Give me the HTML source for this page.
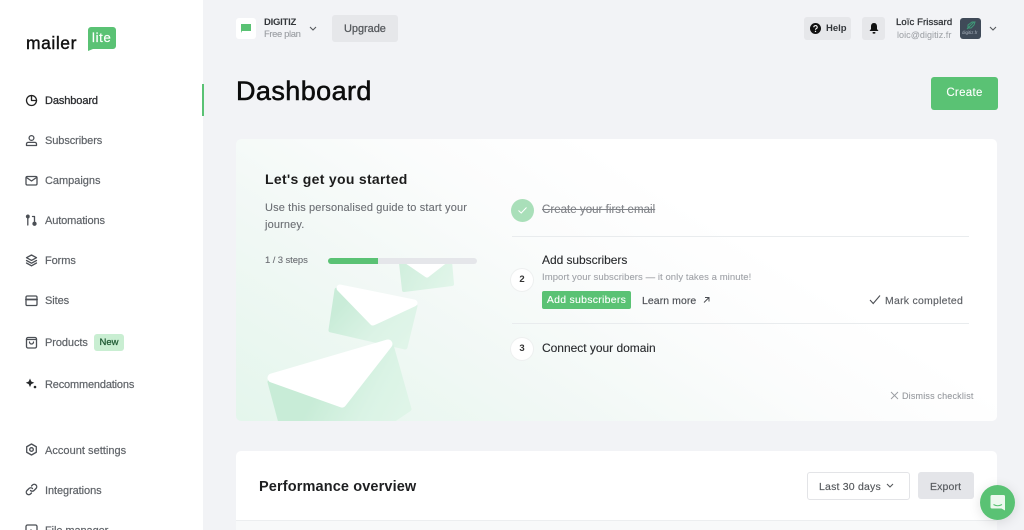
<!DOCTYPE html>
<html lang="en"><head><meta charset="utf-8"><title>Dashboard</title>
<style>
html,body{margin:0;padding:0;width:1024px;height:530px;overflow:hidden;background:#f2f3f6;font-family:"Liberation Sans",sans-serif;color:#1a1a1a}
#r{position:relative;width:1024px;height:530px;overflow:hidden;filter:blur(.3px)}
.a,.t{position:absolute}
.t{white-space:nowrap;line-height:14px}
.n{font-size:11px;color:#5f6368;left:45px;letter-spacing:-.08px;-webkit-text-stroke:.2px #5f6368}
svg{position:absolute;overflow:visible}
.ic{left:25px;width:13px;height:13px;fill:none;stroke:#4b4f55;stroke-width:1.3;stroke-linecap:round;stroke-linejoin:round}
.btn{position:absolute;border-radius:3px;background:#e6e7ea}
.num{position:absolute;width:22px;height:22px;border-radius:50%;background:#fff;box-shadow:0 0 0 1px #eef0f0;text-align:center;font-size:9.5px;font-weight:bold;line-height:22px;color:#333}
.hr{position:absolute;left:512px;width:457px;height:1px;background:#e9ecee}
</style></head><body><div id="r">

<div class="a" style="left:0;top:0;width:203px;height:530px;background:#fff"></div>
<div class="a" style="left:202px;top:84px;width:2px;height:32px;background:#5ac274"></div>

<div class="t" style="left:26px;top:33px;font-size:17.5px;line-height:20px;color:#111;letter-spacing:.55px;-webkit-text-stroke:.4px #111">mailer</div>
<svg style="left:88px;top:27px" width="29" height="24" viewBox="0 0 29 24"><path d="M3 0H25a3 3 0 0 1 3 3V19a3 3 0 0 1-3 3H5L0 24V3a3 3 0 0 1 3-3Z" fill="#5ac274"/></svg>
<div class="t" style="left:92px;top:30px;font-size:13px;line-height:16px;color:#fff;letter-spacing:.7px;-webkit-text-stroke:.2px #fff">lite</div>

<svg class="ic" style="top:94px;stroke:#222" viewBox="0 0 13 13"><circle cx="6.5" cy="6.5" r="5"/><path d="M6.5 1.5V6.5H11.5"/></svg>
<div class="t n" style="top:94px;color:#2b2d30;-webkit-text-stroke:.3px #2b2d30;letter-spacing:-.1px">Dashboard</div>
<svg class="ic" style="top:134px" viewBox="0 0 13 13"><circle cx="6.5" cy="4" r="2.4"/><path d="M1.5 11.5V10a1.6 1.6 0 0 1 1.6-1.6H9.9A1.6 1.6 0 0 1 11.500 10V11.500Z"/></svg>
<div class="t n" style="top:134px">Subscribers</div>
<svg class="ic" style="top:174px" viewBox="0 0 13 13"><rect x="1" y="2.500" width="11" height="8.500" rx="1.200"/><path d="M1.500 3.500 6.500 7 11.500 3.500"/></svg>
<div class="t n" style="top:174px;letter-spacing:-.02px">Campaigns</div>
<svg class="ic" style="top:214px" viewBox="0 0 13 13"><circle cx="2.800" cy="2.500" r="1.300" fill="#4b4f55"/><path d="M2.800 4V11M7.500 2.500H9.500V7"/><circle cx="9.500" cy="9.700" r="1.500" fill="#4b4f55"/></svg>
<div class="t n" style="top:214px;letter-spacing:-.12px">Automations</div>
<svg class="ic" style="top:254px" viewBox="0 0 13 13"><path d="M6.500 1 11.500 3.700 6.500 6.400 1.500 3.700ZM1.500 6.500 6.500 9.200 11.500 6.500M1.500 9 6.500 11.800 11.500 9"/></svg>
<div class="t n" style="top:254px">Forms</div>
<svg class="ic" style="top:294px" viewBox="0 0 13 13"><rect x="1" y="2" width="11" height="9.500" rx="1.300"/><path d="M1 5.500H12" stroke-width="1.800"/></svg>
<div class="t n" style="top:294px">Sites</div>
<svg class="ic" style="top:336px" viewBox="0 0 13 13"><rect x="1.500" y="1.500" width="10" height="10.500" rx="1.500"/><path d="M1.500 3.500H11.500M4.500 6a2 2 0 0 0 4 0"/></svg>
<div class="t n" style="top:336px">Products</div>
<div class="a" style="left:94px;top:334px;width:30px;height:17px;border-radius:3px;background:#c9eed2;text-align:center;font-size:9.500px;line-height:17px;color:#1f5a34;-webkit-text-stroke:.25px #1f5a34">New</div>
<svg class="ic" style="top:377px;stroke:none" viewBox="0 0 13 13"><path d="M5 1.500 6.300 4.500 9.300 5.800 6.300 7.100 5 10.100 3.700 7.100.8 5.800 3.700 4.500Z" fill="#26282b"/><circle cx="10" cy="10" r="1.300" fill="#26282b"/></svg>
<div class="t n" style="top:378px;letter-spacing:-.17px">Recommendations</div>
<svg class="ic" style="top:443px" viewBox="0 0 13 13"><path d="M6.500 1 11.300 3.750V9.250L6.500 12 1.700 9.250V3.750Z"/><circle cx="6.500" cy="6.500" r="1.800"/></svg>
<div class="t n" style="top:444px;letter-spacing:.03px">Account settings</div>
<svg class="ic" style="top:483px" viewBox="0 0 13 13"><path d="M5.500 7.500a2.400 2.400 0 0 0 3.500 0l2-2a2.400 2.400 0 0 0-3.500-3.500l-1 1M7.500 5.500a2.400 2.400 0 0 0-3.500 0l-2 2a2.400 2.400 0 0 0 3.500 3.500l1-1"/></svg>
<div class="t n" style="top:484px">Integrations</div>
<svg class="ic" style="top:524px" viewBox="0 0 13 13"><rect x="1" y="1" width="11" height="11" rx="1.500"/><path d="M3 9 6 6l3 3"/></svg>
<div class="t n" style="top:524px">File manager</div>

<div class="a" style="left:236px;top:18px;width:20px;height:21px;background:#fff;border-radius:3px"></div>
<svg style="left:240px;top:24px" width="12" height="10" viewBox="0 0 12 10"><path d="M1 0H11V7H2L1 9Z" fill="#5ac274"/></svg>
<div class="t" style="left:264px;top:16px;font-size:9.500px;font-weight:bold;color:#33363a;letter-spacing:-.25px">DIGITIZ</div>
<div class="t" style="left:264px;top:28px;font-size:9.500px;color:#9a9da2;letter-spacing:-.4px;-webkit-text-stroke:.1px #9a9da2">Free plan</div>
<svg style="left:309px;top:26px" width="8" height="6" viewBox="0 0 8 6"><path d="M1 1 4 4 7 1" fill="none" stroke="#55585c" stroke-width="1.100"/></svg>
<div class="btn" style="left:332px;top:15px;width:66px;height:27px"></div>
<div class="t" style="left:344px;top:22px;font-size:11px;color:#55585c;letter-spacing:-.05px;-webkit-text-stroke:.25px #55585c">Upgrade</div>

<div class="btn" style="left:804px;top:17px;width:47px;height:23px"></div>
<svg style="left:810px;top:23px" width="11" height="11" viewBox="0 0 11 11"><circle cx="5.500" cy="5.500" r="5.500" fill="#111"/><path d="M3.800 4.200a1.700 1.600 0 1 1 2.500 1.400c-.6.300-.8.600-.8 1.100" fill="none" stroke="#fff" stroke-width="1.100"/><circle cx="5.500" cy="8.400" r=".7" fill="#fff"/></svg>
<div class="t" style="left:826px;top:22px;font-size:9.500px;font-weight:bold;color:#33363a">Help</div>
<div class="btn" style="left:862px;top:17px;width:23px;height:23px"></div>
<svg style="left:869px;top:23px" width="10" height="11" viewBox="0 0 10 11"><path d="M5 0C2.800 0 2 1.800 2 3.500V6L.5 8H9.500L8 6V3.500C8 1.800 7.200 0 5 0Z" fill="#111"/><rect x="3.500" y="9" width="3" height="1.600" rx=".8" fill="#111"/></svg>
<div class="t" style="left:896px;top:16px;font-size:9.500px;color:#33363a;letter-spacing:.1px;-webkit-text-stroke:.3px #33363a">Loïc Frissard</div>
<div class="t" style="left:897px;top:28px;font-size:9px;color:#a2a5aa;letter-spacing:.05px;-webkit-text-stroke:.1px #a2a5aa">loic@digitiz.fr</div>
<div class="a" style="left:960px;top:18px;width:21px;height:21px;border-radius:3px;background:#3f4a58"></div>
<svg style="left:965px;top:21px" width="11" height="9" viewBox="0 0 11 9"><path d="M2 8 9 1M3 4 7 1H10L9 4 6 7H3Z" fill="none" stroke="#3f9a78" stroke-width="1"/></svg>
<div class="t" style="left:962px;top:30px;font-size:4.500px;line-height:6px;color:#a9b2bd">digitiz.fr</div>
<svg style="left:989px;top:26px" width="8" height="6" viewBox="0 0 8 6"><path d="M1 1 4 4 7 1" fill="none" stroke="#55585c" stroke-width="1.100"/></svg>

<div class="t" style="left:236px;top:74px;font-size:27px;line-height:34px;color:#0c0c0c;letter-spacing:.42px;-webkit-text-stroke:.55px #0c0c0c">Dashboard</div>
<div class="a" style="left:931px;top:77px;width:67px;height:33px;border-radius:3px;background:#5ac274;text-align:center;color:#fff;font-size:11.500px;line-height:33px;letter-spacing:.3px;-webkit-text-stroke:.1px #fff">Create</div>

<div class="a" style="left:236px;top:139px;width:761px;height:282px;border-radius:5px;overflow:hidden;background:linear-gradient(32deg,#e4f6ec 0%,#f1f8f5 28%,#fbfcfc 50%,#fff 66%)">
<svg style="left:-236px;top:-139px" width="1024" height="530" viewBox="0 0 1024 530">
<defs>
<linearGradient id="g1" gradientUnits="userSpaceOnUse" x1="395" y1="262" x2="455" y2="292"><stop offset="0" stop-color="#cfeedc"/><stop offset="1" stop-color="#e3f6eb"/></linearGradient>
<linearGradient id="g2" gradientUnits="userSpaceOnUse" x1="345" y1="300" x2="400" y2="350"><stop offset="0" stop-color="#c9ecd8"/><stop offset=".6" stop-color="#dcf3e6"/><stop offset="1" stop-color="#e0f5e9"/></linearGradient>
<linearGradient id="g3" gradientUnits="userSpaceOnUse" x1="320" y1="385" x2="395" y2="425"><stop offset="0" stop-color="#c8ecd7"/><stop offset=".6" stop-color="#daf3e5"/><stop offset="1" stop-color="#dff5e8"/></linearGradient>
</defs>
<path d="M401 263 404 290 452 284 450 261Z" fill="url(#g1)" stroke="url(#g1)" stroke-width="4" stroke-linejoin="round"/>
<path d="M408 262 427 275 445 261Z" fill="#fff" stroke="#fff" stroke-width="5" stroke-linejoin="round"/>
<path d="M337 290 331 330 405 347 415 306Z" fill="url(#g2)" stroke="url(#g2)" stroke-width="5" stroke-linejoin="round"/>
<path d="M340 288 414 303 373 322Z" fill="#fff" stroke="#fff" stroke-width="7" stroke-linejoin="round"/>
<path d="M270 382 284 434 384 426 409 409 391 345Z" fill="url(#g3)" stroke="url(#g3)" stroke-width="5" stroke-linejoin="round"/>
<path d="M272 378 388 344 342 403Z" fill="#fff" stroke="#fff" stroke-width="9" stroke-linejoin="round"/>
</svg>
</div>

<div class="t" style="left:265px;top:171px;font-size:14px;line-height:16px;font-weight:bold;color:#1c1c1c;letter-spacing:.3px">Let's get you started</div>
<div class="t" style="left:265px;top:201px;font-size:11px;color:#6a6d72;letter-spacing:.14px;-webkit-text-stroke:.1px #6a6d72">Use this personalised guide to start your</div>
<div class="t" style="left:265px;top:218px;font-size:11px;color:#6a6d72;letter-spacing:.14px;-webkit-text-stroke:.1px #6a6d72">journey.</div>
<div class="t" style="left:265px;top:254px;font-size:9.500px;color:#6a6d72;letter-spacing:-.1px;-webkit-text-stroke:.1px #6a6d72">1 / 3 steps</div>
<div class="a" style="left:328px;top:258px;width:149px;height:5.500px;border-radius:3px;background:#e5e6ea"></div>
<div class="a" style="left:328px;top:258px;width:50px;height:5.500px;border-radius:3px 0 0 3px;background:#5ac274"></div>

<div class="a" style="left:511px;top:199px;width:23px;height:23px;border-radius:50%;background:#a9dfb9"></div>
<svg style="left:517px;top:206px" width="11" height="9" viewBox="0 0 11 9"><path d="M1.500 4.500 4.200 7 9.500 1.500" fill="none" stroke="#fff" stroke-width="1"/></svg>
<div class="t" style="left:542px;top:203px;font-size:11.500px;color:#808388;text-decoration:line-through;letter-spacing:.03px;-webkit-text-stroke:.1px #808388">Create your first email</div>
<div class="hr" style="top:236px"></div>
<div class="t" style="left:542px;top:253px;font-size:12px;color:#26282b;letter-spacing:-.05px;-webkit-text-stroke:.1px #26282b">Add subscribers</div>
<div class="num" style="left:511px;top:269px">2</div>
<div class="t" style="left:542px;top:271px;font-size:9.500px;color:#a0a3a8;letter-spacing:.07px;-webkit-text-stroke:.1px #a0a3a8">Import your subscribers — it only takes a minute!</div>
<div class="a" style="left:542px;top:291px;width:89px;height:18px;border-radius:2px;background:#5ac274;text-align:center;color:#fff;font-size:10.500px;line-height:19px;letter-spacing:.27px;-webkit-text-stroke:.1px #fff">Add subscribers</div>
<div class="t" style="left:642px;top:294px;font-size:10.500px;color:#4c4f54;letter-spacing:.06px;-webkit-text-stroke:.15px #4c4f54">Learn more</div>
<svg style="left:703px;top:296px" width="7" height="8" viewBox="0 0 7 8"><path d="M1 6.500 6 1.500M2 1.500H6V5.500" fill="none" stroke="#4c4f54" stroke-width="1"/></svg>
<svg style="left:869px;top:294px" width="12" height="11" viewBox="0 0 12 11"><path d="M1 6 4.200 9.500 11 1.500" fill="none" stroke="#4c4f54" stroke-width="1.100"/></svg>
<div class="t" style="left:885px;top:294px;font-size:10.500px;color:#5c5f64;letter-spacing:.24px;-webkit-text-stroke:.15px #5c5f64">Mark completed</div>
<div class="hr" style="top:323px"></div>
<div class="num" style="left:511px;top:338px">3</div>
<div class="t" style="left:542px;top:341px;font-size:12px;color:#26282b;letter-spacing:-.02px;-webkit-text-stroke:.1px #26282b">Connect your domain</div>
<svg style="left:890px;top:391px" width="9" height="9" viewBox="0 0 9 9"><path d="M1 1 8 8M8 1 1 8" fill="none" stroke="#9a9da2" stroke-width=".9"/></svg>
<div class="t" style="left:902px;top:389px;font-size:9px;color:#96999e;letter-spacing:.18px;-webkit-text-stroke:.1px #96999e">Dismiss checklist</div>

<div class="a" style="left:236px;top:451px;width:761px;height:69px;background:#fff;border-radius:5px 5px 0 0;border-bottom:1px solid #eceef0"></div>
<div class="a" style="left:236px;top:521px;width:761px;height:9px;background:#f8f9fa"></div>
<div class="t" style="left:259px;top:478px;font-size:14.500px;line-height:18px;font-weight:bold;color:#1e1f21;letter-spacing:.13px">Performance overview</div>
<div class="a" style="left:807px;top:472px;width:101px;height:26px;background:#fff;border:1px solid #e3e4e7;border-radius:3px"></div>
<div class="t" style="left:819px;top:480px;font-size:10.500px;color:#55585c;letter-spacing:.2px;-webkit-text-stroke:.15px #55585c">Last 30 days</div>
<svg style="left:886px;top:483px" width="8" height="6" viewBox="0 0 8 6"><path d="M1 1 4 4 7 1" fill="none" stroke="#55585c" stroke-width="1.100"/></svg>
<div class="btn" style="left:918px;top:472px;width:56px;height:27px;background:#e4e5e9"></div>
<div class="t" style="left:930px;top:480px;font-size:10.500px;color:#55585c;letter-spacing:.14px;-webkit-text-stroke:.15px #55585c">Export</div>

<div class="a" style="left:980px;top:485px;width:35px;height:35px;border-radius:50%;background:#5ac274;box-shadow:0 2px 12px rgba(0,0,0,.12)"></div>
<svg style="left:990px;top:495px" width="16" height="16" viewBox="0 0 16 16"><path d="M2 0H13.500A1.500 1.500 0 0 1 15 1.500V15.500L11.500 13.500H2A1.500 1.500 0 0 1 .5 12V1.500A1.500 1.500 0 0 1 2 0Z" fill="#ecf8ef"/><path d="M3.500 9.500Q7.700 12 12 9.500" fill="none" stroke="#5ac274" stroke-width="1.100"/></svg>
</div></body></html>
